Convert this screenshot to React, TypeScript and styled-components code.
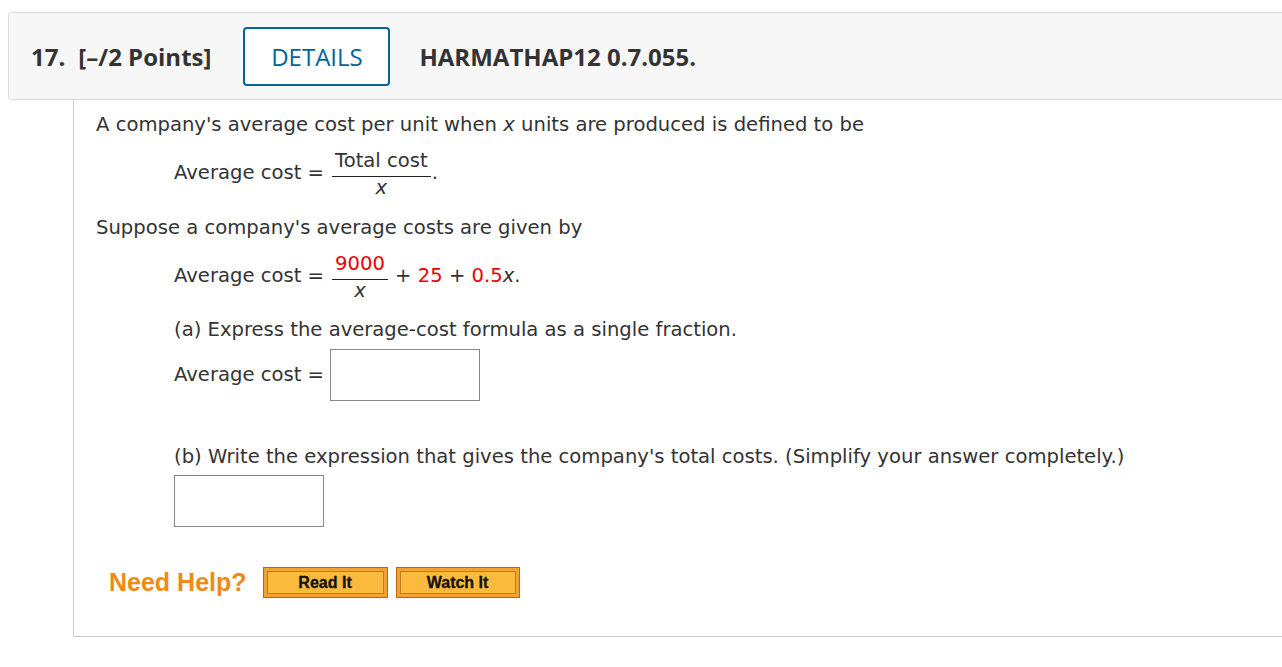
import React from "react";
import styled, { createGlobalStyle } from "styled-components";

const GlobalStyle = createGlobalStyle`
    body {
        margin: 0;
        background: #ffffff;
    }
`;

const Page = styled.div`
    padding: 12px 0 0 8px;
    width: 1290px;
`;

const Header = styled.div`
    display: flex;
    align-items: center;
    box-sizing: border-box;
    height: 88px;
    background-color: #f7f7f7;
    border: 1px solid #dcdcdc;
    border-radius: 3px;
    padding-left: 22px;
    font-family: "Open Sans", sans-serif;
    font-weight: 700;
    font-size: 24px;
    color: #333333;
`;

const QNumber = styled.span`
    margin-right: 13px;
`;

const Points = styled.span`
    margin-right: 32px;
`;

const DetailsButton = styled.div`
    display: flex;
    align-items: center;
    justify-content: center;
    box-sizing: border-box;
    width: 147px;
    height: 59px;
    background: #ffffff;
    border: 2px solid #00659c;
    border-radius: 4px;
    color: #00659c;
    font-weight: 400;
    font-size: 24px;
    margin-right: 29px;
`;

const Body = styled.div`
    margin-left: 65px;
    border-left: 1px solid #cccccc;
    border-bottom: 1px solid #cccccc;
    padding: 13px 0 38px 22px;
    font-family: "DejaVu Sans", Verdana, sans-serif;
    font-size: 19.6px;
    color: #333333;
`;

const Para = styled.div<{ $indent?: boolean; $top?: number }>`
    margin-left: ${(p) => (p.$indent ? "78px" : "0")};
    margin-top: ${(p) => p.$top ?? 0}px;
    line-height: 24px;
    display: flex;
    align-items: center;
    white-space: pre;
`;

const Frac = styled.span`
    display: inline-flex;
    flex-direction: column;
    align-items: center;
    margin: 0 1px 0 8px;
`;

const Num = styled.span<{ $red?: boolean }>`
    padding: 0 3px 1px;
    border-bottom: 1px solid #222;
    line-height: 28px;
    color: ${(p) => (p.$red ? "#ee0000" : "inherit")};
`;

const Den = styled.span`
    line-height: 22px;
    font-style: italic;
`;

const Red = styled.span`
    color: #ee0000;
`;

const Var = styled.i``;

const AnswerBox = styled.div<{ $gap?: number }>`
    width: 148px;
    height: 50px;
    border: 1px solid #888888;
    background: #ffffff;
    margin-left: ${(p) => p.$gap ?? 0}px;
`;

const BoxRow = styled.div`
    margin-left: 78px;
    margin-top: 6px;
`;

const HelpRow = styled.div`
    display: flex;
    align-items: center;
    margin-top: 40px;
    margin-left: 13px;
    gap: 8px;
`;

const HelpLabel = styled.span`
    font-family: "Liberation Sans", Arial, sans-serif;
    font-weight: 700;
    font-size: 25px;
    color: #ef8a14;
    margin-right: 8px;
`;

const HelpButton = styled.div<{ $width: number }>`
    box-sizing: border-box;
    width: ${(p) => p.$width}px;
    height: 31px;
    border: 1px solid #b06a1a;
    background: #f5a032;
    padding: 3px;
    display: flex;
`;

const HelpInner = styled.div`
    flex: 1;
    display: flex;
    align-items: center;
    justify-content: center;
    background: #fbba3e;
    border: 1px solid #c27c26;
    font-family: "Liberation Sans", Arial, sans-serif;
    font-weight: 700;
    font-size: 16px;
    color: #111111;
    -webkit-text-stroke: 0.3px #111111;
`;

export default function App() {
    return (
        <>
            <GlobalStyle />
            <Page>
                <Header>
                    <QNumber>17.</QNumber>
                    <Points>[–/2 Points]</Points>
                    <DetailsButton>DETAILS</DetailsButton>
                    <span>HARMATHAP12 0.7.055.</span>
                </Header>
                <Body>
                    <Para>
                        A company's average cost per unit when <Var>x</Var> units are produced is defined to be
                    </Para>
                    <Para $indent $top={10}>
                        Average cost =
                        <Frac>
                            <Num>Total cost</Num>
                            <Den>x</Den>
                        </Frac>
                        .
                    </Para>
                    <Para $top={17}>Suppose a company's average costs are given by</Para>
                    <Para $indent $top={10}>
                        Average cost =
                        <Frac>
                            <Num $red>9000</Num>
                            <Den>x</Den>
                        </Frac>
                        {" + "}
                        <Red>25</Red>
                        {" + "}
                        <Red>0.5</Red>
                        <Var>x</Var>.
                    </Para>
                    <Para $indent $top={16}>
                        (a) Express the average-cost formula as a single fraction.
                    </Para>
                    <Para $indent $top={7}>
                        Average cost =
                        <AnswerBox $gap={6} />
                    </Para>
                    <Para $indent $top={44}>
                        (b) Write the expression that gives the company's total costs. (Simplify your answer completely.)
                    </Para>
                    <BoxRow>
                        <AnswerBox />
                    </BoxRow>
                    <HelpRow>
                        <HelpLabel>Need Help?</HelpLabel>
                        <HelpButton $width={125}>
                            <HelpInner>Read It</HelpInner>
                        </HelpButton>
                        <HelpButton $width={124}>
                            <HelpInner>Watch It</HelpInner>
                        </HelpButton>
                    </HelpRow>
                </Body>
            </Page>
        </>
    );
}
